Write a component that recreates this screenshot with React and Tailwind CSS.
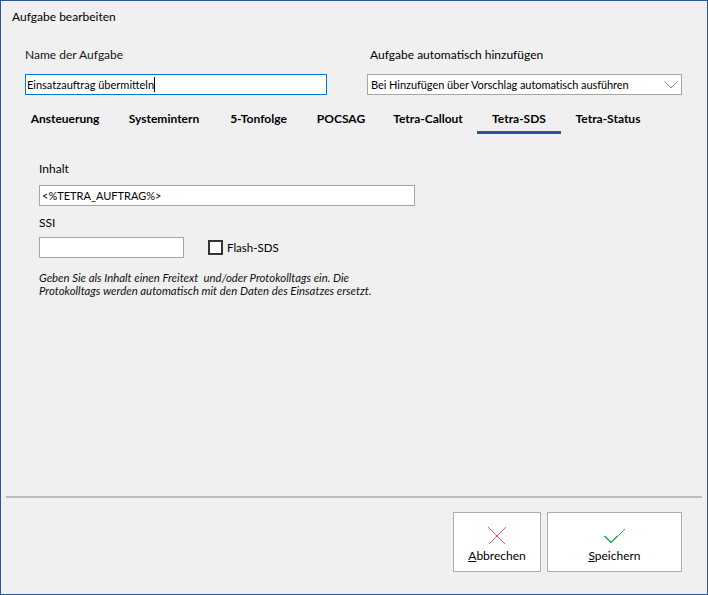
import { useState } from "react";

const tabs = [
  { label: "Ansteuerung", w: "w-[98px]" },
  { label: "Systemintern", w: "w-[100px]" },
  { label: "5-Tonfolge", w: "w-[89px]" },
  { label: "POCSAG", w: "w-[76px]" },
  { label: "Tetra-Callout", w: "w-[98px]" },
  { label: "Tetra-SDS", w: "w-[84px]", active: true },
  { label: "Tetra-Status", w: "w-[94px]" },
];

function CancelIcon() {
  return (
    <svg width="18" height="18" viewBox="0 0 18 18" className="block">
      <path d="M0.5 0.5L17.5 17.5M17.5 0.5L0.5 17.5" stroke="#f4525a" strokeWidth="1" fill="none" shapeRendering="crispEdges" />
    </svg>
  );
}

function SaveIcon() {
  return (
    <svg width="22" height="16" viewBox="0 0 22 16" className="block">
      <path d="M0.5 8L7 14.5L21.5 0.5" stroke="#22b35e" strokeWidth="1" fill="none" shapeRendering="crispEdges" />
    </svg>
  );
}

export default function App() {
  const [flash, setFlash] = useState(false);

  return (
    <div className="w-[708px] h-[595px] flex flex-col border border-[#2b579a] bg-[#f0f0f0] text-[12px] leading-[16px] text-black font-['Lato','Open_Sans',sans-serif]">
      <div className="h-[33px] pl-[11px] pt-[8px]">Aufgabe bearbeiten</div>

      <div className="flex pl-[24px] pt-[13px]">
        <div className="w-[342px] flex flex-col">
          <label className="h-[27px] text-[#1a1020]">Name der Aufgabe</label>
          <div className="w-[302px] h-[21px] border border-[#0078d7] bg-white flex items-center pl-[1px] text-[11px]">
            <span>Einsatzauftrag übermitteln</span>
            <span className="w-px h-[15px] bg-black" />
          </div>
        </div>
        <div className="w-[315px] flex flex-col">
          <label className="h-[27px] pl-[3px]">Aufgabe automatisch hinzufügen</label>
          <div className="w-[315px] h-[21px] border border-[#a5a5a5] bg-white flex items-center justify-between pl-[3px] pr-[3px] text-[11px] tracking-[-0.06px]">
            <span>Bei Hinzufügen über Vorschlag automatisch ausführen</span>
            <svg width="14" height="8" viewBox="0 0 14 8" className="block">
              <path d="M0.5 0.5L7 7L13.5 0.5" stroke="#8a8a8a" strokeWidth="1" fill="none" />
            </svg>
          </div>
        </div>
      </div>

      <div className="flex pl-[15px] mt-[13px] h-[26px]">
        {tabs.map((t) => (
          <div
            key={t.label}
            className={`${t.w} flex justify-center font-bold pt-[3px] border-b-[3px] ${t.active ? "border-[#2b579a]" : "border-transparent"}`}
          >
            {t.label}
          </div>
        ))}
      </div>

      <div className="flex flex-col pl-[38px] pt-[27px] flex-1">
        <label className="h-[24px]">Inhalt</label>
        <div className="w-[376px] h-[21px] border border-[#a5a5a5] bg-white flex items-center pl-[2px] text-[11px]">
          {"<%TETRA_AUFTRAG%>"}
        </div>
        <label className="h-[31px] pt-[9px]">SSI</label>
        <div className="flex items-center">
          <div className="w-[145px] h-[21px] border border-[#a5a5a5] bg-white" />
          <button
            type="button"
            onClick={() => setFlash(!flash)}
            className={`ml-[24px] w-[15px] h-[15px] border-2 border-[#333333] ${flash ? "bg-[#333333]" : "bg-white"}`}
          />
          <span className="ml-[4px] pt-[1px] text-[11.5px]">Flash-SDS</span>
        </div>
        <p className="mt-[13px] text-[11.36px] leading-[13px] italic text-[#111111]">
          Geben Sie als Inhalt einen Freitext&nbsp; und/oder Protokolltags ein. Die
          <br />
          Protokolltags werden automatisch mit den Daten des Einsatzes ersetzt.
        </p>
      </div>

      <div className="mx-[5px] h-[2px] bg-[#bdbdbd]" />

      <div className="flex justify-end gap-[6px] pt-[14px] pr-[25px] pb-[22px]">
        <button type="button" className="w-[88px] h-[60px] border border-[#adadad] bg-white flex flex-col items-center pt-[14px]">
          <CancelIcon />
          <span className="mt-[3px]"><span className="underline">A</span>bbrechen</span>
        </button>
        <button type="button" className="w-[135px] h-[60px] border border-[#adadad] bg-white flex flex-col items-center pt-[15px]">
          <SaveIcon />
          <span className="mt-[4px]"><span className="underline">S</span>peichern</span>
        </button>
      </div>
    </div>
  );
}
